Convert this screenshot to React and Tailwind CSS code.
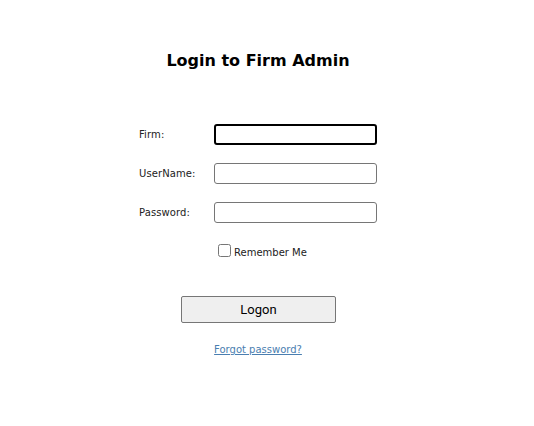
import React, { useState } from 'react'

const fields = [
  { id: 'firm', label: 'Firm:', type: 'text' },
  { id: 'user', label: 'UserName:', type: 'text' },
  { id: 'pass', label: 'Password:', type: 'password' },
]

const App = () => {
  const [remember, setRemember] = useState(false)

  return (
    <div className="min-h-[426px] bg-white font-['DejaVu_Sans',Verdana,sans-serif] text-black">
      <div className="w-[516px] flex flex-col items-center pt-[51px]">
        <h1 className="text-[16px] font-bold leading-[20px]">Login to Firm Admin</h1>

        {/* form rows */}
        <div className="self-start ml-[139px] mt-[53px] flex flex-col gap-[18px]">
          {fields.map((f, i) => (
            <div key={f.id} className="flex items-center">
              <label htmlFor={f.id} className="w-[75px] shrink-0 text-[10px] tracking-[0.1px] text-[#222]">
                {f.label}
              </label>
              <input
                id={f.id}
                type={f.type}
                className={`w-[163px] shrink-0 h-[21px] rounded-[3px] bg-white px-1 text-[12px] outline-none ${
                  i === 0 ? 'border-2 border-black' : 'border border-[#767676]'
                }`}
              />
            </div>
          ))}

          <label className="ml-[75px] flex items-center text-[10px] text-[#222]">
            <input
              type="checkbox"
              checked={remember}
              onChange={(e) => setRemember(e.target.checked)}
              className="w-[13px] h-[13px] ml-[4px] mr-[3px] my-0"
            />
            <span className="mt-[4px]">Remember Me</span>
          </label>
        </div>

        <button className="mt-[36px] ml-[1px] w-[155px] h-[27px] rounded-[2px] border border-[#767676] bg-[#efefef] font-['Roboto',sans-serif] text-[13px] text-black">
          Logon
        </button>

        <a href="#" className="mt-[19px] text-[10px] text-[#4a7eb0] underline">
          Forgot password?
        </a>
      </div>
    </div>
  )
}

export default App
